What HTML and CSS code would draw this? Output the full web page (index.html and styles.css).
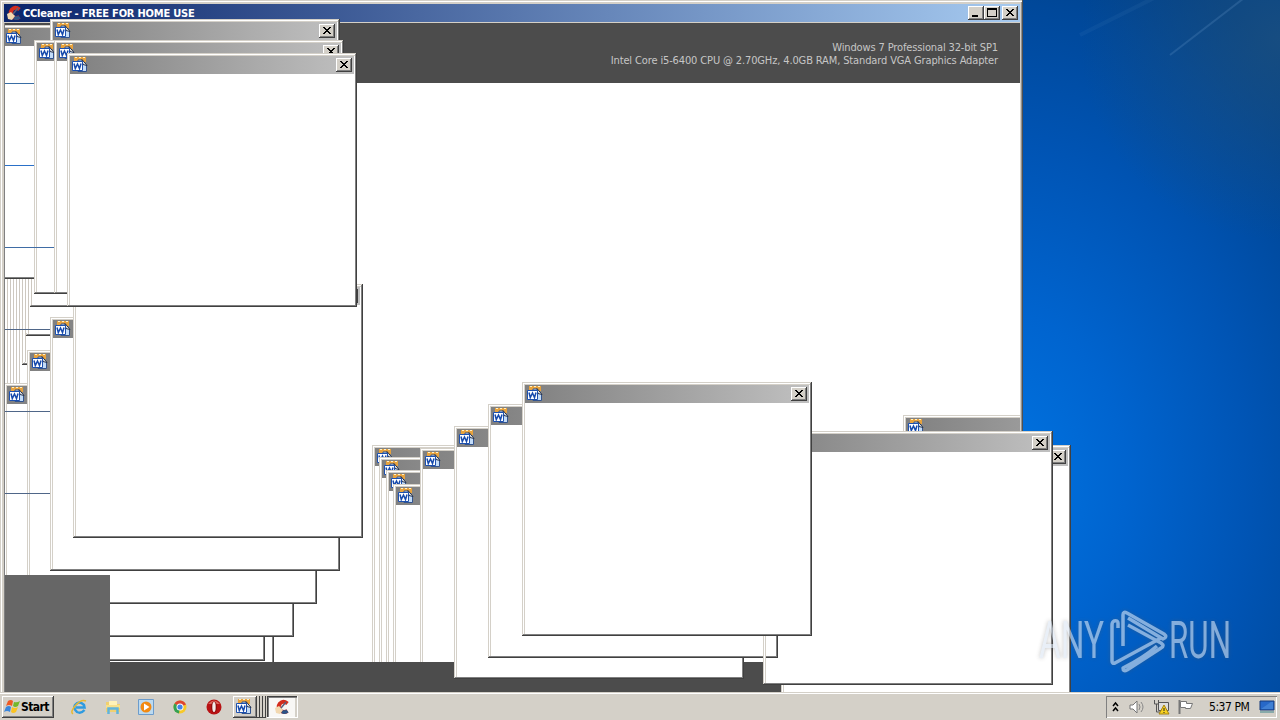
FILE: index.html
```
<!DOCTYPE html>
<html lang="en">
<head>
  <meta charset="UTF-8">
  <title>Desktop</title>
  <link rel="stylesheet" href="styles.css">
</head>
<body>
  <svg class="defs" width="0" height="0">
    <symbol id="word" viewBox="0 0 16 16">
      <path d="M2 0h12v5H2z" fill="#e8a33d"/>
      <path d="M3 .5h2M7 .5h2M11 .5h2" stroke="#fff0c8"/>
      <path d="M6 3h4l4.500 5v6.500H6z" fill="#c3dcf8" stroke="#31538f"/>
      <path d="M10 2.500l5 6-4-1z" fill="#fff" stroke="#26334d"/>
      <path d="M.5 4.500h10v9H.5z" fill="#fff" stroke="#1d50ae"/>
      <path d="M2 6.500l1.300 5L5.500 7l2 4.500 1.500-5" fill="none" stroke="#1549ac" stroke-width="1.500"/>
    </symbol>
    <symbol id="cc" viewBox="0 0 16 16">
      <path d="M13.500 4.500Q9 1 6 4.500 3.500 8 6 11" fill="none" stroke="#d42c1d" stroke-width="4"/>
      <path d="M6 11q3 3.500 7.500 1" fill="none" stroke="#b52a2a" stroke-width="4"/>
      <path d="M8 12.500q3 1.500 5.500-.5" fill="none" stroke="#2c5487" stroke-width="3.500"/>
      <path d="M1 9l4-2 4 4-3 4-4-1z" fill="#f2d8b0"/>
      <path d="M7 9l5-6" stroke="#5b5f7c" stroke-width="1.500"/>
    </symbol>
    <symbol id="x" viewBox="0 0 16 14">
      <path d="M4 3h2v1h1v1h2V4h1V3h2v1h-1v1h-1v1H9v1h1v1h1v1h1v1h-2V9H9V8H7v1H6v1H4V9h1V8h1V7h1V6H6V5H5V4H4z"/>
    </symbol>
  </svg>

  <div class="desktop">
    <svg class="rays" width="260" height="692">
      <path d="M150 55L228-5" stroke="#7aa8d8" stroke-width="2" opacity=".2"/>
      <path d="M60 35L140-5" stroke="#7aa8d8" stroke-width="4" opacity=".07"/>
    </svg>

    <div class="main">
      <div class="main-title">
        <svg class="app-icon"><use href="#cc"/></svg>
        <span class="main-name">CCleaner - FREE FOR HOME USE</span>
        <div class="buttons">
          <span class="btn"><svg viewBox="0 0 16 14"><path d="M4 9h6v2H4z"/></svg></span>
          <span class="btn"><svg viewBox="0 0 16 14"><path d="M3 2h10v9H3zM4 4v6h8V4z" fill-rule="evenodd"/></svg></span>
          <span class="btn last"><svg><use href="#x"/></svg></span>
        </div>
      </div>
      <div class="client">
        <div class="banner">
          <p>Windows 7 Professional 32-bit SP1</p>
          <p class="cpu">Intel Core i5-6400 CPU @ 2.70GHz, 4.0GB RAM, Standard VGA Graphics Adapter</p>
        </div>
        <div class="page"></div>
        <div class="status"></div>
      </div>
    </div>

    <!-- windows clipped to the main client area -->
    <div class="clip">
      <div class="win s3"></div>
      <div class="win s2"></div>
      <div class="win s1"></div>
      <div class="win a1"><div class="bar"><svg class="icon"><use href="#word"/></svg></div></div>
      <div class="trail"></div>
      <div class="win b1"></div>
      <div class="win b2"></div>
      <div class="win b3"></div>
      <div class="win c1"><div class="bar"><svg class="icon"><use href="#word"/></svg></div></div>
      <div class="win c2"><div class="bar"><svg class="icon"><use href="#word"/></svg></div></div>
      <div class="win r1"><div class="bar"><svg class="icon"><use href="#word"/></svg></div></div>
      <div class="win m1"><div class="bar"><svg class="icon"><use href="#word"/></svg></div></div>
      <div class="win m2"><div class="bar"><svg class="icon"><use href="#word"/></svg></div></div>
      <div class="win m3"><div class="bar"><svg class="icon"><use href="#word"/></svg></div></div>
      <div class="win m4"><div class="bar"><svg class="icon"><use href="#word"/></svg></div></div>
      <div class="win m5"><div class="bar"><svg class="icon"><use href="#word"/></svg></div></div>
      <div class="footer"></div>
      <div class="corner"></div>
    </div>

    <div class="win c3"><div class="bar"><svg class="icon"><use href="#word"/></svg></div></div>
    <div class="win c4"><div class="bar"><span class="btn"><svg><use href="#x"/></svg></span></div></div>

    <div class="win t1"><div class="bar"><svg class="icon"><use href="#word"/></svg><span class="btn"><svg><use href="#x"/></svg></span></div></div>
    <div class="win t2"><div class="bar"><svg class="icon"><use href="#word"/></svg></div></div>
    <div class="win t3"><div class="bar"><svg class="icon"><use href="#word"/></svg><span class="btn"><svg><use href="#x"/></svg></span></div></div>
    <div class="win t4"><div class="bar"><svg class="icon"><use href="#word"/></svg><span class="btn"><svg><use href="#x"/></svg></span></div></div>

    <div class="win r2"><div class="bar"><span class="btn"><svg><use href="#x"/></svg></span></div></div>
    <div class="win r3"><div class="bar"><span class="btn"><svg><use href="#x"/></svg></span></div></div>
    <div class="win m6"><div class="bar"><svg class="icon"><use href="#word"/></svg></div></div>
    <div class="win m7"><div class="bar"><svg class="icon"><use href="#word"/></svg></div></div>
    <div class="edge"></div>
    <div class="win m8"><div class="bar"><svg class="icon"><use href="#word"/></svg><span class="btn"><svg><use href="#x"/></svg></span></div></div>

    <i class="rule l1"></i><i class="rule l2"></i><i class="rule l3"></i>
    <i class="rule l4"></i><i class="rule l5"></i><i class="rule l6"></i>

    <div class="watermark">
      <svg width="220" height="70" viewBox="0 0 220 70">
        <text x="3" y="54" textLength="65" lengthAdjust="spacingAndGlyphs">ANY</text>
        <g class="logo">
          <path d="M82 24v-5q0-3-4-2-2 1-2 4v36q0 3 3 2l46-25"/>
          <path d="M87 42V11q0-4 4-2l37 21q4 3-1 5L92 14"/>
          <path d="M92 21l33 18q4 3 0 5L91 66q-4 2-4-2 20-10 34-22"/>
        </g>
        <text x="133" y="54" textLength="62" lengthAdjust="spacingAndGlyphs">RUN</text>
      </svg>
    </div>
  </div>

  <div class="taskbar">
    <div class="start">
      <svg width="17" height="16" viewBox="0 0 17 16">
        <path d="M4 2q3-2 5 0L8 7Q5 5 2 7z" fill="#ef5a24"/>
        <path d="M10 3q3 1 6-1l-2 5q-3 2-5 0z" fill="#74b72c"/>
        <path d="M2 8q3-2 5 0l-1 5q-3-2-6 0z" fill="#3a86dc"/>
        <path d="M8 8q3 2 6 0l-2 5q-3 2-5 0z" fill="#fbc321"/>
      </svg>
      <b>Start</b>
    </div>
    <div class="quick">
      <svg viewBox="0 0 16 16"><path d="M13.500 11Q10 15 6 13 2 10 4 6q4-5 9 0l.5 2.500H5" fill="none" stroke="#2f9be0" stroke-width="2.500"/><path d="M2 15Q-1 13 4 7 10 0 15 2" fill="none" stroke="#e8b830" stroke-width="1.500"/></svg>
      <svg viewBox="0 0 16 16"><path d="M1 3h5l1 2h8v8H1z" fill="#f0d070"/><path d="M4 2h8v5H4z" fill="#fff2b8"/><path d="M1 6h14v3H1z" fill="#f7e08c"/><path d="M3.500 15V9.500h9V15" fill="none" stroke="#60b4dc" stroke-width="2.500"/></svg>
      <svg viewBox="0 0 16 16"><path d="M.5.5h15v15H.5z" fill="#bcdaf0" stroke="#6c9ccc"/><circle cx="8" cy="8" r="5.500" fill="#f28a12"/><path d="M6 4.500L11.500 8 6 11.500z" fill="#fff"/></svg>
      <svg viewBox="0 0 16 16"><circle cx="8" cy="8" r="6.500" fill="#f7c928"/><path d="M8 8L2.500 4.500A6.500 6.500 0 0 1 14 5.500z" fill="#dd4532"/><path d="M8 8L2.500 4.500A6.500 6.500 0 0 0 7 14.500z" fill="#35a153"/><circle cx="8" cy="8" r="3.500" fill="#fff"/><circle cx="8" cy="8" r="2.600" fill="#4284e8"/></svg>
      <svg viewBox="0 0 16 16"><circle cx="8" cy="8" r="7.500" fill="#b81214"/><path d="M2 5Q8-2 14 5z" fill="#dd635c"/><ellipse cx="8" cy="8" rx="3" ry="5.500" fill="#8c0d0d"/><ellipse cx="8" cy="8" rx="1.700" ry="5" fill="#f2eaea"/></svg>
    </div>
    <div class="tasks">
      <div class="task"><svg class="icon"><use href="#word"/></svg></div>
      <i class="sliver"></i><i class="sliver"></i><i class="sliver"></i>
      <div class="task active"><svg class="icon"><use href="#cc"/></svg></div>
    </div>
    <div class="tray">
      <svg class="chev" width="8" height="12" viewBox="0 0 8 12"><path d="M1 5l2.500-3L6 5M1 10l2.500-3L6 10" fill="none" stroke="#000" stroke-width="1.500"/></svg>
      <svg class="speaker" width="17" height="16" viewBox="0 0 17 16"><path d="M1 6h3l4-4v12l-4-4H1z" fill="#fff" stroke="#777"/><path d="M10 5q2 3 0 6M12 3q4 5 0 10" fill="none" stroke="#888"/></svg>
      <svg class="net" width="17" height="16" viewBox="0 0 17 16"><path d="M5.500 3.500h10v8h-10z" fill="#ddd" stroke="#555"/><path d="M1.500 1v4h4V1M3.500 5v8h4" fill="none" stroke="#555"/><path d="M11 6l5 9H6z" fill="#f8d11f" stroke="#a58210"/><path d="M11 9v3M11 13v1" stroke="#222"/></svg>
      <svg class="flag" width="17" height="16" viewBox="0 0 17 16"><path d="M2.500 1v14" stroke="#777" stroke-width="2"/><path d="M3.500 2.500h6v2h6l-2 5h-5v-1h-5z" fill="#fff" stroke="#777"/></svg>
      <span class="clock">5:37 PM</span>
      <svg class="show" width="16" height="14" viewBox="0 0 16 14"><path d="M1 1h14v9H1z" fill="#2768c8" stroke="#173b7b"/><path d="M2 9l10-7h2v7z" fill="#4080d4"/><path d="M1 12h14" stroke="#8aa" stroke-width="2"/></svg>
    </div>
  </div>
</body>
</html>
```

FILE: styles.css
```
* {
  margin: 0;
  padding: 0;
  box-sizing: border-box;
}

body {
  width: 1280px;
  height: 720px;
  overflow: hidden;
  font-family: "DejaVu Sans Condensed", "DejaVu Sans", sans-serif;
  font-stretch: condensed;
  font-size: 11px;
}

svg {
  display: block;
}

.defs {
  position: absolute;
}

.desktop {
  position: relative;
  height: 692px;
  overflow: hidden;
  background:
    radial-gradient(circle at 1280px 40px, rgba(28, 80, 128, 0.8) 0, rgba(28, 80, 128, 0) 200px),
    radial-gradient(ellipse 420px 560px at 1000px 480px, #0074e2 0%, #0064cf 30%, #0054b4 60%, #00489a 85%, #003f85 100%);
}

.rays {
  position: absolute;
  left: 1020px;
  top: 0;
}

/* main window */
.main {
  position: absolute;
  left: 0;
  top: 0;
  width: 1023px;
  height: 700px;
  padding: 4px 2px 0 4px;
  background: #d4d0c8;
  border-right: 1px solid #505050;
  box-shadow: inset 1px 1px #d4d0c8, inset 2px 2px #fff, inset -1px 0 #909090;
}

.main-title {
  display: flex;
  align-items: center;
  height: 18px;
  padding: 0 2px;
  background: linear-gradient(90deg, #0a246a, #a6caf0);
}

.app-icon {
  width: 16px;
  height: 16px;
}

.main-name {
  margin-left: 1px;
  color: #fff;
  font-weight: bold;
  letter-spacing: -0.2px;
  white-space: nowrap;
}

.buttons {
  display: flex;
  margin-left: auto;
}

.btn {
  width: 16px;
  height: 14px;
  background: #d4d0c8;
  box-shadow: inset -1px -1px #404040, inset 1px 1px #fff, inset -2px -2px #808080;
}

.btn svg {
  width: 16px;
  height: 14px;
}

.buttons .last {
  margin-left: 2px;
}

.client {
  display: flex;
  flex-direction: column;
  height: 669px;
  margin-top: 1px;
  border-left: 1px solid #808080;
}

.banner {
  height: 60px;
  padding: 18px 22px 0 0;
  background: #4c4c4c;
  color: #c6c6c6;
  text-align: right;
  line-height: 13px;
  letter-spacing: -0.13px;
}

.page {
  flex: 1;
  background: #fff;
}

.status {
  height: 30px;
  background: #4c4c4c;
}

.clip {
  position: absolute;
  left: 5px;
  top: 23px;
  width: 1015px;
  height: 669px;
  overflow: hidden;
}

/* small document windows */
.win {
  position: absolute;
  width: 290px;
  height: 254px;
  padding: 3px;
  background: #fff;
  box-shadow:
    inset -1px -1px #404040,
    inset 1px 1px #d4d0c8,
    inset -2px -2px #808080,
    inset 2px 2px #fff,
    inset 3px 3px #d4d0c8;
}

.bar {
  display: flex;
  align-items: center;
  height: 18px;
  padding: 0 2px;
  background: linear-gradient(90deg, #808080, #c0c0c0);
}

.bar .btn {
  margin-left: auto;
}

.icon {
  width: 16px;
  height: 16px;
}

.s1 { left: 25px; top: 30px; }
.s2 { left: 21px; top: 59px; }
.s3 { left: 17px; top: 88px; }
.a1 { left: -4px; top: 2px; }
.b1 { left: -38px; top: 385px; }
.b2 { left: -21px; top: 390px; }
.b3 { left: -30px; top: 384px; }
.c1 { left: -1px; top: 360px; }
.c2 { left: 22px; top: 327px; }
.m1 { left: 367px; top: 422px; }
.m2 { left: 374px; top: 434px; }
.m3 { left: 381px; top: 447px; }
.m4 { left: 388px; top: 461px; }
.m5 { left: 415px; top: 425px; }
.r1 { left: 898px; top: 392px; }

.c3 { left: 50px; top: 317px; }
.c4 { left: 73px; top: 284px; }
.t1 { left: 50px; top: 19px; }
.t2 { left: 34px; top: 40px; }
.t3 { left: 54px; top: 40px; }
.t4 { left: 67px; top: 53px; }
.r2 { left: 781px; top: 445px; }
.r3 { left: 763px; top: 431px; }
.m6 { left: 454px; top: 426px; height: 253px; }
.m7 { left: 488px; top: 404px; }
.m8 { left: 522px; top: 382px; }

.m1, .m2, .m3, .m4, .m5 {
  height: 300px;
}

/* left borders smeared by the moving window */
.trail {
  position: absolute;
  left: 0;
  top: 256px;
  width: 29px;
  height: 105px;
  background: repeating-linear-gradient(90deg, #fff 0 2px, #cdc8c0 2px 3px);
  clip-path: polygon(0 0, 29px 0, 29px 26px, 25px 26px, 25px 54px, 21px 54px, 21px 83px, 17px 83px, 17px 105px, 0 105px);
}

.footer {
  position: absolute;
  left: 105px;
  right: 0;
  bottom: 0;
  height: 30px;
  background: #4c4c4c;
}

.corner {
  position: absolute;
  left: 0;
  bottom: 0;
  width: 105px;
  height: 117px;
  background: #666;
}

.edge {
  position: absolute;
  left: 763px;
  top: 636px;
  width: 3px;
  height: 26px;
  background: linear-gradient(90deg, #d4d0c8 1px, #fff 1px 2px, #d4d0c8 2px);
}

.rule {
  position: absolute;
  left: 5px;
  width: 45px;
  height: 1px;
  background: #4f6688;
}

.l1 { top: 83px; width: 29px; background: #3a6ea5; }
.l2 { top: 165px; width: 29px; background: #2a70c8; }
.l3 { top: 247px; width: 49px; background: #3f6ca5; }
.l4 { top: 329px; }
.l5 { top: 411px; }
.l6 { top: 493px; }

.watermark {
  position: absolute;
  left: 1036px;
  top: 604px;
  opacity: 0.6;
  filter: drop-shadow(0 0 2px rgba(90, 90, 90, 0.6));
}

.watermark text {
  fill: #dce6f2;
  font: 51px Roboto, sans-serif;
}

.logo path {
  fill: none;
  stroke: #dce6f2;
  stroke-width: 3.5;
  stroke-linejoin: round;
}

/* taskbar */
.taskbar {
  display: flex;
  align-items: center;
  height: 28px;
  padding: 2px 3px 0 2px;
  background: #d4d0c8;
  box-shadow: inset 0 1px #d4d0c8, inset 0 2px #fff;
}

.start {
  display: flex;
  align-items: center;
  width: 52px;
  height: 22px;
  padding-left: 2px;
  box-shadow: inset -1px -1px #404040, inset 1px 1px #fff, inset -2px -2px #808080;
}

.start b {
  font-size: 12px;
  letter-spacing: -0.6px;
}

.quick {
  display: flex;
  gap: 17.7px;
  margin-left: 17px;
}

.quick svg {
  width: 16px;
  height: 16px;
}

.tasks {
  display: flex;
  margin-left: 11px;
}

.task {
  width: 24px;
  height: 22px;
  padding: 3px;
  box-shadow: inset -1px -1px #404040, inset 1px 1px #fff, inset -2px -2px #808080;
}

.sliver {
  width: 3px;
  height: 22px;
  border-right: 1px solid #404040;
  border-bottom: 1px solid #404040;
}

.task.active {
  width: 31px;
  margin-left: 1px;
  padding-left: 7px;
  background: #f8f7f5;
  box-shadow: inset -1px -1px #fff, inset 1px 1px #404040, inset 2px 2px #808080, inset -3px 0 #d4d0c8;
}

.tray {
  display: flex;
  align-items: center;
  width: 171px;
  height: 22px;
  margin-left: auto;
  padding-left: 6px;
  box-shadow: inset 1px 1px #808080, inset -1px -1px #fff;
}

.speaker {
  margin-left: 9px;
}

.net {
  margin-left: 7px;
}

.flag {
  margin-left: 7px;
}

.clock {
  width: 41px;
  margin-left: 15px;
  font-size: 12px;
  letter-spacing: -0.45px;
  white-space: nowrap;
}

.show {
  margin-left: 9px;
}
```
